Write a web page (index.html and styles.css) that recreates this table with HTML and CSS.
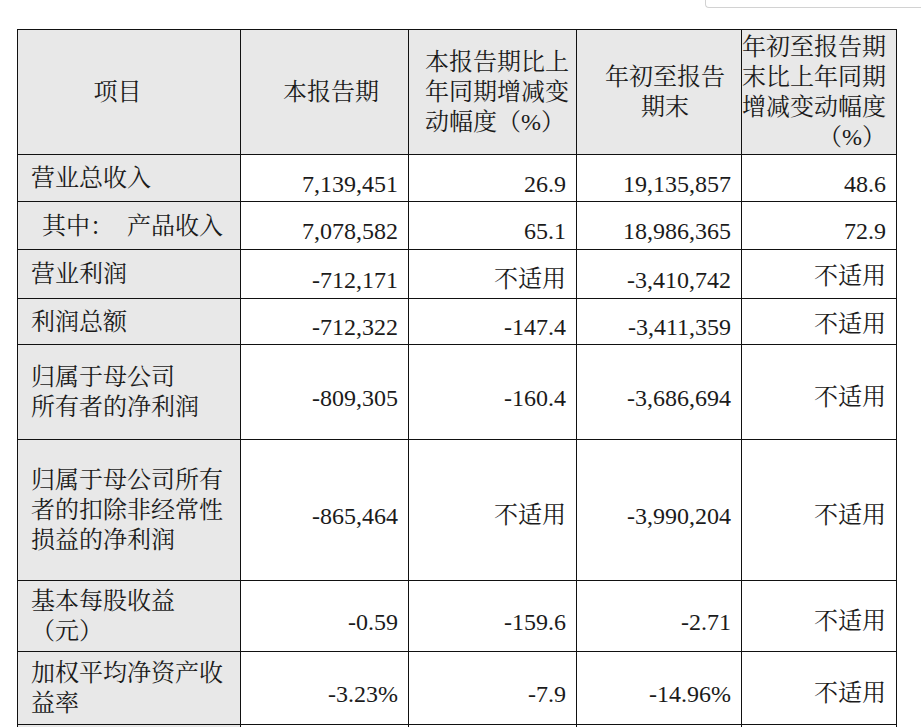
FILE: index.html
```html
<!DOCTYPE html>
<html lang="zh-CN">
<head>
<meta charset="utf-8">
<title>主要财务数据</title>
<link rel="stylesheet" href="styles.css">
</head>
<body>
<div class="topbar"><div class="searchbox"></div></div>
<div class="wrap">
<table class="fin">
  <thead>
    <tr class="h-head">
      <th class="hd hd-item c1">项目</th>
      <th class="hd hd-cur c2">本报告期</th>
      <th class="hd hd-left c3">本报告期比上<br>年同期增减变<br>动幅度（%）</th>
      <th class="hd hd-ytd c4">年初至报告<br>期末</th>
      <th class="hd hd-right c5">年初至报告期<br>末比上年同期<br>增减变动幅度<br>（%）</th>
    </tr>
  </thead>
  <tbody>
    <tr class="h47">
      <td class="lbl">营业总收入</td>
      <td class="num">7,139,451</td>
      <td class="num">26.9</td>
      <td class="num">19,135,857</td>
      <td class="num">48.6</td>
    </tr>
    <tr class="h48">
      <td class="lbl"><span class="sub">其中：</span><span class="sub-gap">产品收入</span></td>
      <td class="num">7,078,582</td>
      <td class="num">65.1</td>
      <td class="num">18,986,365</td>
      <td class="num">72.9</td>
    </tr>
    <tr class="h49">
      <td class="lbl">营业利润</td>
      <td class="num">-712,171</td>
      <td class="num na">不适用</td>
      <td class="num">-3,410,742</td>
      <td class="num na na-r">不适用</td>
    </tr>
    <tr class="h46">
      <td class="lbl">利润总额</td>
      <td class="num">-712,322</td>
      <td class="num">-147.4</td>
      <td class="num">-3,411,359</td>
      <td class="num na na-r">不适用</td>
    </tr>
    <tr class="h95">
      <td class="lbl">归属于母公司<br>所有者的净利润</td>
      <td class="num">-809,305</td>
      <td class="num">-160.4</td>
      <td class="num">-3,686,694</td>
      <td class="num na">不适用</td>
    </tr>
    <tr class="h141">
      <td class="lbl">归属于母公司所有<br>者的扣除非经常性<br>损益的净利润</td>
      <td class="num">-865,464</td>
      <td class="num na">不适用</td>
      <td class="num">-3,990,204</td>
      <td class="num na">不适用</td>
    </tr>
    <tr class="h71">
      <td class="lbl">基本每股收益<br>（元）</td>
      <td class="num">-0.59</td>
      <td class="num">-159.6</td>
      <td class="num">-2.71</td>
      <td class="num na">不适用</td>
    </tr>
    <tr class="h73">
      <td class="lbl">加权平均净资产收<br>益率</td>
      <td class="num">-3.23%</td>
      <td class="num">-7.9</td>
      <td class="num">-14.96%</td>
      <td class="num na">不适用</td>
    </tr>
    <tr class="h60">
      <td class="lbl"></td>
      <td class="num"></td>
      <td class="num"></td>
      <td class="num"></td>
      <td class="num"></td>
    </tr>
  </tbody>
</table>
</div>
</body>
</html>
```
FILE: styles.css
```css
html, body {
  margin: 0;
  padding: 0;
  background: #ffffff;
}

body {
  font-family: "Liberation Serif", "Noto Serif CJK SC", "Noto Sans CJK SC", serif;
  color: #1b1b1b;
  overflow: hidden;
}

.topbar {
  height: 8px;
}

.searchbox {
  margin-left: 705px;
  height: 7px;
  border-left: 1px solid #d2d2d2;
  border-bottom: 1px solid #d2d2d2;
  border-bottom-left-radius: 4px;
}

.wrap {
  padding-left: 17px;
  margin-top: 21px;
}

.fin {
  border-collapse: collapse;
  table-layout: fixed;
  width: 880px;
  font-size: 24px;
  line-height: 30px;
}

.fin .c1 { width: 223px; }
.fin .c2 { width: 168px; }
.fin .c3 { width: 168px; }
.fin .c4 { width: 165px; }
.fin .c5 { width: 155px; }

.fin th,
.fin td {
  box-sizing: border-box;
  border: 1px solid #111111;
  padding: 0;
  vertical-align: middle;
  overflow: hidden;
}

.fin .hd {
  background: #e8e8e8;
  font-weight: normal;
  height: 125px;
}

.fin .hd-item {
  text-align: center;
  padding-right: 23px;
}

.fin .hd-cur {
  text-align: center;
  padding-left: 13px;
}

.fin .hd-left {
  text-align: left;
  padding-left: 16px;
}

.fin .hd-ytd {
  text-align: center;
  padding-left: 12px;
}

.fin .hd-right {
  text-align: right;
  padding-right: 10px;
  white-space: nowrap;
}

.fin .lbl {
  background: #e8e8e8;
  text-align: left;
  padding-left: 13px;
}

.sub {
  padding-left: 11px;
}

.sub-gap {
  padding-left: 13px;
}

.fin .num {
  text-align: right;
  padding-right: 10px;
  padding-top: 11px;
}

.fin .na {
  padding-top: 10px;
}

.fin .na-r {
  padding-top: 4px;
  padding-bottom: 0;
}

.h47 { height: 47px; }
.h48 { height: 48px; }
.h49 { height: 49px; }
.h46 { height: 46px; }
.h95 { height: 95px; }
.h141 { height: 141px; }
.h71 { height: 71px; }
.h73 { height: 73px; }
.h60 { height: 60px; }
```
